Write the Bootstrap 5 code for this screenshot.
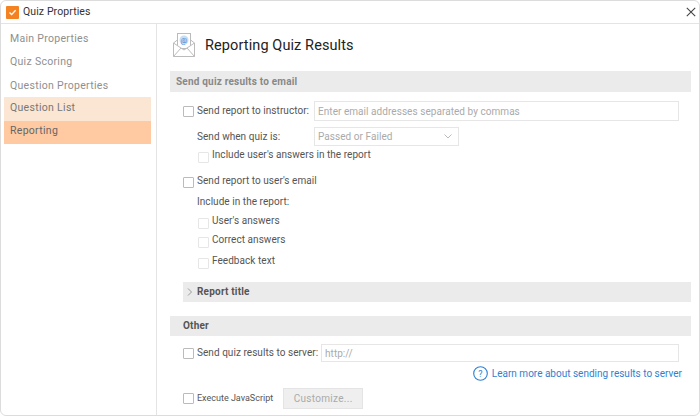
<!DOCTYPE html>
<html lang="en">
<head>
  <meta charset="UTF-8">
  <meta name="viewport" content="width=device-width, initial-scale=1.0">
  <title>Quiz Proprties</title>
  <link rel="stylesheet" href="https://cdn.jsdelivr.net/npm/bootstrap@5.3.0/dist/css/bootstrap.min.css">
  <style>
    html, body { height: 100%; background: #fff; overflow: hidden; }
    body { font-family: Roboto, "Liberation Sans", sans-serif; font-size: 10px; color: #555; letter-spacing: .05px; white-space: nowrap; line-height: 1.2; }
    .quiz-window { width: 700px; height: 416px; border: 1px solid #dcdcdc; border-radius: 6px; overflow: hidden; background: #fff; }
    .title-bar { height: 23px; border-bottom: 1px solid #e4e4e4; padding-left: 5px; color: #333; font-size: 10.5px; flex: none; letter-spacing: .1px; }
    .title-logo { width: 13px; height: 13px; background: #f58220; border-radius: 1px; margin-right: 4px; }
    .close-x { margin-left: auto; margin-right: 3px; }
    .side-pane { width: 156px; border-right: 1px solid #e4e4e4; padding: 3px 0 0 3px; flex: none; }
    .side-item { padding-left: 6px; color: #8f8f8f; font-size: 10.5px; width: 147px; letter-spacing: .3px; }
    .side-h { height: 23.3px; padding-top: 2px; }
    .side-h-mid { padding-top: 1px; }
    .side-light { background: #fae6d3; color: #777; height: 24px; padding-bottom: 2px; }
    .side-dark { background: #ffcaa2; color: #666; height: 23px; padding-bottom: 2px; }
    .main-pane { padding: 0 8px 0 13px; }
    .head-row { height: 47px; padding-top: 9px; padding-left: 3px; }
    .head-row h1 { font-size: 14.5px; font-weight: 400; line-height: 25px; color: #222; margin: 0 0 0 10px; letter-spacing: .1px; }
    .band { background: #ebebeb; height: 21px; font-weight: 700; color: #888; padding-left: 6px; font-size: 10px; letter-spacing: .2px; }
    .band-sub { margin-left: 13px; height: 20px; color: #555; padding-left: 4px; gap: 4px; }
    .band-other { padding-left: 13px; height: 20px; color: #555; }
    .quiz-row { padding-left: 13px; }
    .cb { width: 11px; height: 11px; border: 1px solid #bbb; border-radius: 1px; background: #fff; flex: none; margin-right: 3px; margin-top: 1px; }
    .cb-off { width: 11px; height: 11px; border: 1px solid #e6e6e6; border-radius: 1px; flex: none; margin-right: 3px; margin-top: 4px; }
    .fake-input { border: 1px solid #e6e6e6; color: #aaa; padding-left: 3px; background: #fff; }
    .row-instructor { height: 20px; margin-top: 9px; }
    .row-when { height: 19px; margin-top: 6px; padding-left: 27px; }
    .fake-select { width: 145px; height: 19px; padding-right: 6px; }
    .when-label { width: 117px; }
    .row-sub { padding-left: 28px; height: 14px; }
    .row-plain { padding-left: 27px; height: 14px; }
    .w-input { width: 365px; height: 20px; margin-left: auto; margin-right: 12px; padding-top: 2px; }
    .w-input-2 { width: 358px; height: 18px; margin-left: auto; margin-right: 12px; padding-top: 2px; }
    .mt-a { margin-top: 2px; }
    .mt-b { margin-top: 11px; height: 15px; }
    .mt-b .cb { margin-top: 4px; }
    .mt-c { margin-top: 7px; }
    .mt-e { margin-top: 5px; }
    .mt-f { margin-top: 7px; }
    .mt-g { margin-top: 14px; }
    .mt-h { margin-top: 14px; }
    .mt-i { margin-top: 8px; height: 18px; }
    .mt-i .cb { margin-top: 1px; }
    .link-row { height: 15px; margin-top: 4px; padding-right: 9px; color: #2f7fd1; letter-spacing: 0; }
    .row-js { margin-top: 7px; height: 21px; font-size: 9px; letter-spacing: 0; }
    .row-js .cb { margin-top: 0; }
    .fake-btn { width: 80px; height: 21px; background: #efefef; border: 1px solid #e4e4e4; color: #aaa; font-size: 10px; margin-left: 10px; letter-spacing: .3px; }
  </style>
</head>
<body>
<div class="quiz-window d-flex flex-column">
  <div class="title-bar d-flex align-items-center">
    <span class="title-logo d-flex align-items-center justify-content-center">
      <svg width="9" height="9" viewBox="0 0 9 9"><path d="M1.500 4.600 3.600 6.600 7.600 2.200" fill="none" stroke="#fff" stroke-width="1.400"/></svg>
    </span>
    <span>Quiz Proprties</span>
    <svg class="close-x" width="10" height="10" viewBox="0 0 10 10"><path d="M.8.8 9.200 9.200M9.200.8.8 9.200" stroke="#444" stroke-width="1.100"/></svg>
  </div>
  <div class="d-flex flex-grow-1">
    <div class="side-pane">
      <div class="side-item side-h d-flex align-items-center">Main Properties</div>
      <div class="side-item side-h side-h-mid d-flex align-items-center">Quiz Scoring</div>
      <div class="side-item side-h d-flex align-items-center">Question Properties</div>
      <div class="side-item side-light d-flex align-items-center">Question List</div>
      <div class="side-item side-dark d-flex align-items-center">Reporting</div>
    </div>
    <div class="main-pane flex-grow-1">
      <div class="head-row d-flex align-items-start">
        <svg width="22" height="25" viewBox="0 0 22 25">
          <path d="M.5 10 5 6.500M21.500 10 17 6.500" fill="none" stroke="#bbb"/>
          <rect x="4.500" y=".5" width="13" height="15" fill="#fff" stroke="#bbb"/>
          <circle cx="11" cy="7" r="4.500" fill="#c5def5"/>
          <text x="11" y="9.500" font-size="7.500" text-anchor="middle" fill="#3a86d4" font-family="Roboto">@</text>
          <path d="M.5 10V23.500H21.500V10L11 17Z" fill="#fff" stroke="#bbb"/>
          <path d="M.5 23.500 8 15M21.500 23.500 14 15" fill="none" stroke="#bbb"/>
        </svg>
        <h1>Reporting Quiz Results</h1>
      </div>
      <div class="band d-flex align-items-center">Send quiz results to email</div>

      <div class="quiz-row row-instructor d-flex align-items-center">
        <span class="cb"></span><span>Send report to instructor:</span>
        <div class="fake-input w-input d-flex align-items-center">Enter email addresses separated by commas</div>
      </div>
      <div class="row-when d-flex align-items-center">
        <span class="when-label">Send when quiz is:</span>
        <div class="fake-input fake-select d-flex align-items-center justify-content-between">
          <span>Passed or Failed</span>
          <svg width="8" height="5" viewBox="0 0 8 5"><path d="M.5.5 4 4 7.500.5" fill="none" stroke="#bbb"/></svg>
        </div>
      </div>
      <div class="row-sub mt-a d-flex align-items-center"><span class="cb-off"></span><span>Include user's answers in the report</span></div>

      <div class="quiz-row mt-b d-flex align-items-center"><span class="cb"></span><span>Send report to user's email</span></div>
      <div class="row-plain mt-c d-flex align-items-center">Include in the report:</div>
      <div class="row-sub mt-e d-flex align-items-center"><span class="cb-off"></span><span>User's answers</span></div>
      <div class="row-sub mt-e d-flex align-items-center"><span class="cb-off"></span><span>Correct answers</span></div>
      <div class="row-sub mt-f d-flex align-items-center"><span class="cb-off"></span><span>Feedback text</span></div>

      <div class="band band-sub mt-g d-flex align-items-center">
        <svg width="6" height="8" viewBox="0 0 6 8"><path d="M1 .5 4.500 4 1 7.500" fill="none" stroke="#999"/></svg>
        <span>Report title</span>
      </div>
      <div class="band band-other mt-h d-flex align-items-center">Other</div>

      <div class="quiz-row mt-i d-flex align-items-center">
        <span class="cb"></span><span>Send quiz results to server:</span>
        <div class="fake-input w-input-2 d-flex align-items-center">http://</div>
      </div>
      <div class="link-row d-flex align-items-center justify-content-end">
        <svg class="me-1" width="15" height="15" viewBox="0 0 15 15"><circle cx="7.500" cy="7.500" r="6.800" fill="none" stroke="#2f7fd1" stroke-width="1.100"/><text x="7.500" y="10.800" font-size="9" text-anchor="middle" fill="#2f7fd1" font-family="Roboto">?</text></svg>
        <span>Learn more about sending results to server</span>
      </div>
      <div class="quiz-row row-js d-flex align-items-center">
        <span class="cb"></span><span>Execute JavaScript</span>
        <div class="fake-btn d-flex align-items-center justify-content-center">Customize...</div>
      </div>
    </div>
  </div>
</div>
</body>
</html>
